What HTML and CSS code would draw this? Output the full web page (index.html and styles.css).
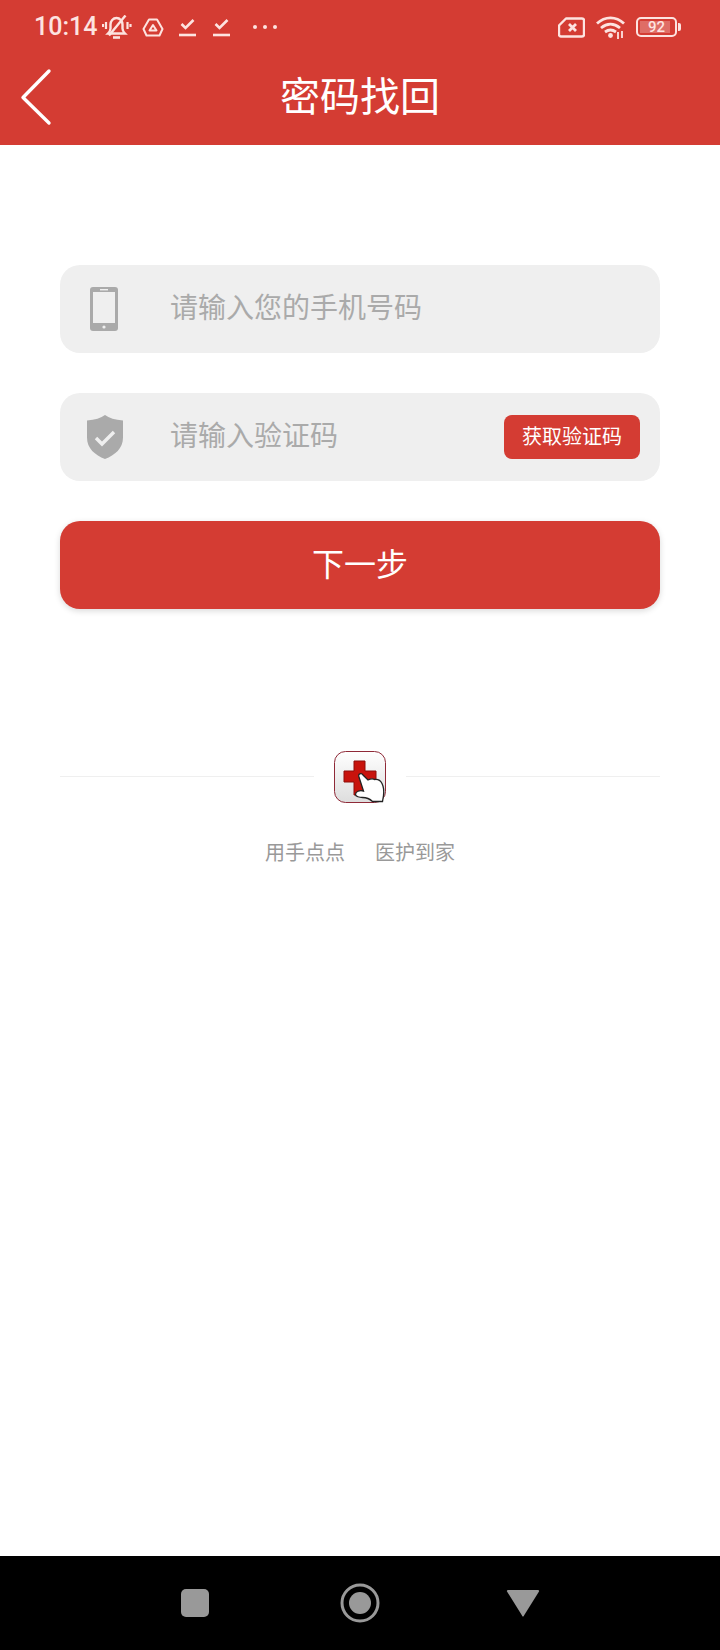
FILE: index.html
```html
<!DOCTYPE html>
<html lang="zh-CN">
<head>
    <meta charset="UTF-8">
    <meta name="viewport" content="width=device-width, initial-scale=1.0">
    <title>密码找回</title>
    <link rel="stylesheet" href="styles.css">
</head>
<body>
    <div class="page">
        <header class="top">
            <div class="status">
                <div class="status-left">
                    <span class="time">10:14</span>
                    <svg class="ic-bell" width="30" height="24" viewBox="0 0 30 24" fill="none" stroke="#fde3e0" stroke-width="2.400">
                        <path d="M6 18.500 h17 c-1.500-1.500-2.500-3-2.500-5 v-4 c0-3.500-2.500-6.500-6-6.500 s-6 3-6 6.500 v4 c0 2-1 3.500-2.500 5 z"/>
                        <path d="M11 22.500 h7" stroke-width="2.600"/>
                        <path d="M7 20.500 L23.500 0.500"/>
                        <path d="M4 7 v7 M1 9 v3 M25.500 7 v7 M28.500 9 v3" stroke-width="2.200"/>
                    </svg>
                    <svg class="ic-drive" width="22" height="19" viewBox="0 0 22 19" fill="none" stroke="#fde3e0" stroke-width="2" stroke-linejoin="round">
                        <path d="M7 1.500 h8 l5.500 9.500 -3 6.500 h-13 l-3-6.500 z"/>
                        <path d="M11 7 l3.500 5.500 h-7 z"/>
                    </svg>
                    <svg class="ic-check" width="17" height="20" viewBox="0 0 17 20" fill="none" stroke="#fde3e0" stroke-width="2.600">
                        <path d="M2.500 7 l4 4 8-8"/>
                        <path d="M0 18 h17"/>
                    </svg>
                    <svg class="ic-check" width="17" height="20" viewBox="0 0 17 20" fill="none" stroke="#fde3e0" stroke-width="2.600">
                        <path d="M2.500 7 l4 4 8-8"/>
                        <path d="M0 18 h17"/>
                    </svg>
                    <svg class="ic-dots" width="24" height="6" viewBox="0 0 24 6" fill="#fde3e0">
                        <circle cx="2" cy="3" r="2"/><circle cx="12" cy="3" r="2"/><circle cx="22" cy="3" r="2"/>
                    </svg>
                </div>
                <div class="status-right">
                    <svg width="27" height="21" viewBox="0 0 27 21" fill="none" stroke="#fde3e0" stroke-width="2.400" stroke-linejoin="round">
                        <path d="M8 1.500 h16 a2 2 0 0 1 2 2 v14 a2 2 0 0 1-2 2 h-21 a2 2 0 0 1-2-2 v-9 z"/>
                        <path d="M11 7 l7 7 M18 7 l-7 7" stroke-width="2.800"/>
                    </svg>
                    <svg width="29" height="23" viewBox="0 0 29 23" fill="none" stroke="#fde3e0" stroke-width="2.800">
                        <path d="M1 7.500 c8-7.500 19-7.500 27 0"/>
                        <path d="M5 12 c6-5 13-5 19 0"/>
                        <path d="M9 16 c3.500-2.500 7.500-2.500 11 0"/>
                        <circle cx="14.500" cy="19.500" r="2.400" fill="#fde3e0" stroke="none"/>
                        <path d="M22 16 v7 M26 15 v7" stroke-width="1.800"/>
                    </svg>
                    <div class="battery">
                        <div class="battery-body"><span class="battery-fill"></span><span class="battery-num">92</span></div>
                        <span class="battery-tip"></span>
                    </div>
                </div>
            </div>
            <div class="nav">
                <svg class="back" width="32" height="58" viewBox="0 0 32 58" fill="none" stroke="#fff" stroke-width="3.400" stroke-linecap="round" stroke-linejoin="round">
                    <path d="M29 3 L3 29.500 L29 55"/>
                </svg>
                <h1>密码找回</h1>
            </div>
        </header>

        <main class="content">
            <form class="form">
                <div class="field">
                    <svg class="field-icon phone" width="28" height="44" viewBox="0 0 28 44">
                        <rect x="0" y="0" width="28" height="44" rx="3" fill="#aaa"/>
                        <rect x="3" y="5" width="22" height="31" fill="#efefef"/>
                        <rect x="10" y="2" width="8" height="1.400" fill="#efefef"/>
                        <circle cx="14" cy="40" r="1.600" fill="#efefef"/>
                    </svg>
                    <span class="placeholder">请输入您的手机号码</span>
                </div>
                <div class="field">
                    <svg class="field-icon" width="36" height="44" viewBox="0 0 36 44">
                        <path d="M18 0 c4 3 10 5 18 5.500 v17 c0 11-8 17.500-18 21.500 c-10-4-18-10.500-18-21.500 v-17 c8-.5 14-2.500 18-5.500 z" fill="#aaa"/>
                        <path d="M9 23 l6 6 12-12" fill="none" stroke="#efefef" stroke-width="3.400"/>
                    </svg>
                    <span class="placeholder">请输入验证码</span>
                    <button type="button" class="code-btn">获取验证码</button>
                </div>
                <button type="button" class="next-btn">下一步</button>
            </form>

            <div class="brand">
                <div class="brand-row">
                    <span class="rule"></span>
                    <svg class="logo" width="52" height="52" viewBox="0 0 52 52">
                        <defs>
                            <linearGradient id="tile" x1="0" y1="0" x2="0" y2="1">
                                <stop offset="0" stop-color="#ffffff"/>
                                <stop offset="1" stop-color="#dddddd"/>
                            </linearGradient>
                        </defs>
                        <rect x="0.500" y="0.500" width="51" height="51" rx="11" fill="url(#tile)" stroke="#8f2a38"/>
                        <path d="M20 10 h11 v10 h11 v11 h-11 v13 h-11 v-13 h-10 v-11 h10 z" fill="#c8130c" stroke="#8d0f0a" stroke-width="1"/>
                        <path d="M25 26 c-1.500-3 2.500-4.500 4-2 l5 5 c3-1.500 5-1.500 6.500-.5 c3-.5 6 1 7.500 4 c1.500 3 2 8 1.500 12 l-1 6 h-10 c-3-3-6-4-10-4 c-3 0-7-1-7-3 c0-3 4-4.500 8-3.500 z" fill="#fff" stroke="#222" stroke-width="1.300"/>
                    </svg>
                    <span class="rule"></span>
                </div>
                <div class="brand-text">
                    <span>用手点点</span>
                    <span>医护到家</span>
                </div>
            </div>
        </main>

        <footer class="navbar">
            <svg width="30" height="30" viewBox="0 0 30 30"><rect x="1" y="1" width="28" height="28" rx="5" fill="#999"/></svg>
            <svg width="40" height="40" viewBox="0 0 40 40">
                <circle cx="20" cy="20" r="18" fill="none" stroke="#999" stroke-width="3"/>
                <circle cx="20" cy="20" r="11" fill="#999"/>
            </svg>
            <svg width="34" height="28" viewBox="0 0 34 28"><path d="M2 1 h30 a1 1 0 0 1 1 1.500 l-15 24 a1 1 0 0 1-2 0 l-15-24 a1 1 0 0 1 1-1.500 z" fill="#999"/></svg>
        </footer>
    </div>
</body>
</html>
```
FILE: styles.css
```css
* {
    box-sizing: border-box;
}
body {
    margin: 0;
    font-family: "Noto Sans CJK SC", "Noto Sans", sans-serif;
    background: #fff;
}
.page {
    width: 720px;
    height: 1650px;
    display: flex;
    flex-direction: column;
}
.top {
    height: 145px;
    background: #d43c33;
    flex-shrink: 0;
}
.status {
    height: 54px;
    display: flex;
    justify-content: space-between;
    align-items: center;
    padding: 0 39px 0 34px;
    color: #fde3e0;
}
.status-left,
.status-right {
    display: flex;
    align-items: center;
}
.time {
    font-family: Roboto, sans-serif;
    font-size: 25px;
    font-weight: 500;
    line-height: 30px;
}
.ic-bell {
    margin-left: 5px;
}
.ic-drive {
    margin-left: 10px;
}
.ic-check {
    margin-left: 15px;
}
.ic-check + .ic-check {
    margin-left: 17px;
}
.ic-dots {
    margin-left: 23px;
}
.status-right {
    gap: 11px;
}
.battery {
    display: flex;
    align-items: center;
    gap: 1px;
}
.battery-body {
    position: relative;
    width: 41px;
    height: 20px;
    border: 2px solid #fde3e0;
    border-radius: 5px;
    display: flex;
    align-items: center;
    justify-content: center;
}
.battery-fill {
    position: absolute;
    left: 2px;
    top: 2px;
    bottom: 2px;
    width: 30px;
    background: rgba(255, 255, 255, 0.25);
}
.battery-num {
    position: relative;
    font-family: Roboto, sans-serif;
    font-size: 15px;
    font-weight: 500;
    line-height: 16px;
}
.battery-tip {
    width: 3px;
    height: 8px;
    background: #fde3e0;
    border-radius: 0 2px 2px 0;
}
.nav {
    position: relative;
    height: 91px;
    display: flex;
    align-items: center;
    justify-content: center;
}
.back {
    position: absolute;
    left: 20px;
    top: 14px;
}
h1 {
    margin: 0 0 12px;
    font-size: 40px;
    font-weight: 400;
    color: #fff;
    line-height: 56px;
}
.content {
    flex: 1;
    padding: 120px 60px 0;
}
.form {
    display: flex;
    flex-direction: column;
    gap: 40px;
}
.field {
    position: relative;
    height: 88px;
    background: #efefef;
    border-radius: 20px;
    display: flex;
    align-items: center;
    padding-left: 110px;
}
.field-icon {
    position: absolute;
    left: 27px;
    top: 22px;
}
.field-icon.phone {
    left: 30px;
}
.placeholder {
    font-size: 28px;
    color: #aaa;
    line-height: 40px;
    margin-bottom: 6px;
}
.code-btn {
    margin-left: auto;
    margin-right: 20px;
    width: 136px;
    height: 44px;
    border: none;
    border-radius: 8px;
    background: #d43c33;
    color: #fff;
    font-family: inherit;
    font-size: 20px;
    padding: 0 0 4px;
}
.next-btn {
    height: 88px;
    border: none;
    border-radius: 20px;
    background: #d43c33;
    color: #fff;
    font-family: inherit;
    font-size: 32px;
    padding: 0 0 6px;
    box-shadow: 0 2px 6px rgba(0, 0, 0, 0.15);
}
.brand {
    margin-top: 142px;
}
.brand-row {
    display: flex;
    align-items: center;
    gap: 20px;
}
.rule {
    flex: 1;
    height: 1px;
    margin-bottom: 1px;
    background: #efefef;
}
.logo {
    flex-shrink: 0;
}
.brand-text {
    margin-top: 35px;
    display: flex;
    justify-content: center;
    gap: 30px;
    font-size: 20px;
    line-height: 28px;
    color: #999;
}
.navbar {
    height: 94px;
    background: #000;
    flex-shrink: 0;
    display: flex;
    align-items: center;
    justify-content: center;
}
.navbar svg:nth-child(1) {
    margin-right: 130px;
}
.navbar svg:nth-child(2) {
    margin-right: 126px;
}
```
